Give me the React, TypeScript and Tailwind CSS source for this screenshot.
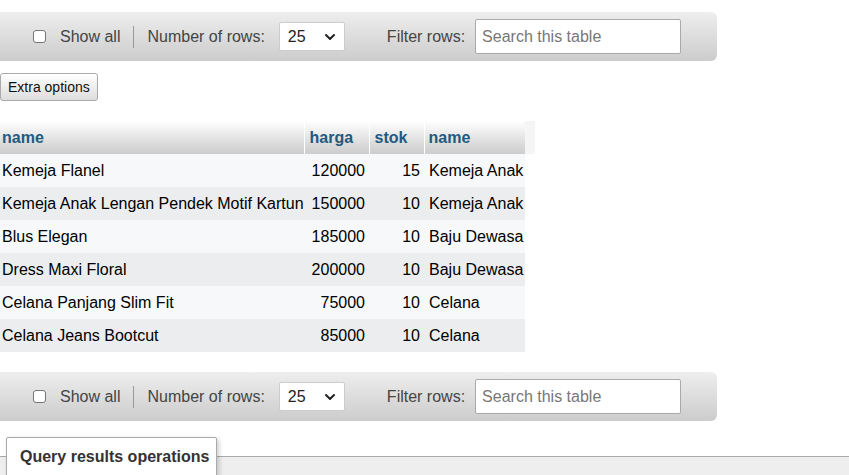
import { ChevronDown } from "lucide-react";

const rows = [
  ["Kemeja Flanel", "120000", "15", "Kemeja Anak"],
  ["Kemeja Anak Lengan Pendek Motif Kartun", "150000", "10", "Kemeja Anak"],
  ["Blus Elegan", "185000", "10", "Baju Dewasa"],
  ["Dress Maxi Floral", "200000", "10", "Baju Dewasa"],
  ["Celana Panjang Slim Fit", "75000", "10", "Celana"],
  ["Celana Jeans Bootcut", "85000", "10", "Celana"],
];

function Navbar() {
  return (
    <div className="flex items-center h-[49px] w-[717px] rounded-r-[6px] bg-gradient-to-b from-[#eeeeee] to-[#cccccc] text-[16px] text-[#444]">
      <span className="ml-[33px] w-[13px] h-[13px] rounded-[3px] border border-[#767676] bg-white" />
      <span className="ml-[14px]">Show all</span>
      <span className="ml-[13px] w-px h-[22px] bg-[#999]" />
      <span className="ml-[13px]">Number of rows:</span>
      <div className="ml-[14px] flex items-center justify-between w-[66px] h-[29px] border border-[#ccc] rounded-[2px] bg-white pl-[8px] pr-[6px] text-[#222]">
        <span>25</span>
        <ChevronDown size={16} strokeWidth={3} className="text-[#222]" />
      </div>
      <span className="ml-[42px]">Filter rows:</span>
      <div className="ml-[10px] flex items-center w-[206px] h-[35px] border border-[#aaa] rounded-[2px] bg-white px-[6px] text-[#777]">
        Search this table
      </div>
    </div>
  );
}

export default function App() {
  return (
    <div className="w-[849px] h-[475px] overflow-hidden bg-white font-['Liberation_Sans',Arial,sans-serif]">
      <div className="pt-[12px]">
        <Navbar />
      </div>
      <button className="mt-[12px] h-[28px] px-[7px] border border-[#aaa] rounded-[3px] bg-gradient-to-b from-white to-[#dddddd] text-[14px] text-[#111]">
        Extra options
      </button>
      <div className="mt-[20px] flex">
        <table className="table-fixed w-[525px] border-collapse text-[16px]">
          <thead>
            <tr className="h-[33px] bg-gradient-to-b from-white to-[#cccccc] text-[#235a81] font-bold text-left">
              <th className="w-[304px] pl-[2px] border-r border-white">name</th>
              <th className="w-[65px] pl-[5px] border-r border-white">harga</th>
              <th className="w-[55px] pl-[5px] border-r border-white">stok</th>
              <th className="w-[101px] pl-[4px]">name</th>
            </tr>
          </thead>
          <tbody>
            {rows.map((r, i) => (
              <tr key={i} className={`h-[33px] text-black ${i % 2 === 0 ? "bg-[#f7f8fa]" : "bg-[#ebedef]"}`}>
                <td className="pl-[2px] whitespace-nowrap">{r[0]}</td>
                <td className="text-right pr-[4px]">{r[1]}</td>
                <td className="text-right pr-[4px]">{r[2]}</td>
                <td className="pl-[5px] whitespace-nowrap overflow-hidden">{r[3]}</td>
              </tr>
            ))}
          </tbody>
        </table>
        <div className="w-[10px] h-[33px] bg-[#f5f5f5]" />
      </div>
      <div className="mt-[20px]">
        <Navbar />
      </div>
      <div className="relative mt-[35px] border-t border-[#aaa] bg-[#eeeeee] h-[40px]">
        <div className="absolute left-[6px] top-[-20px] h-[40px] w-[211px] pl-[13px] flex items-center border border-[#aaa] rounded-t-[2px] bg-white shadow-[2px_2px_5px_rgba(0,0,0,0.2)] text-[16px] font-bold text-[#333] whitespace-nowrap">
          Query results operations
        </div>
      </div>
    </div>
  );
}
